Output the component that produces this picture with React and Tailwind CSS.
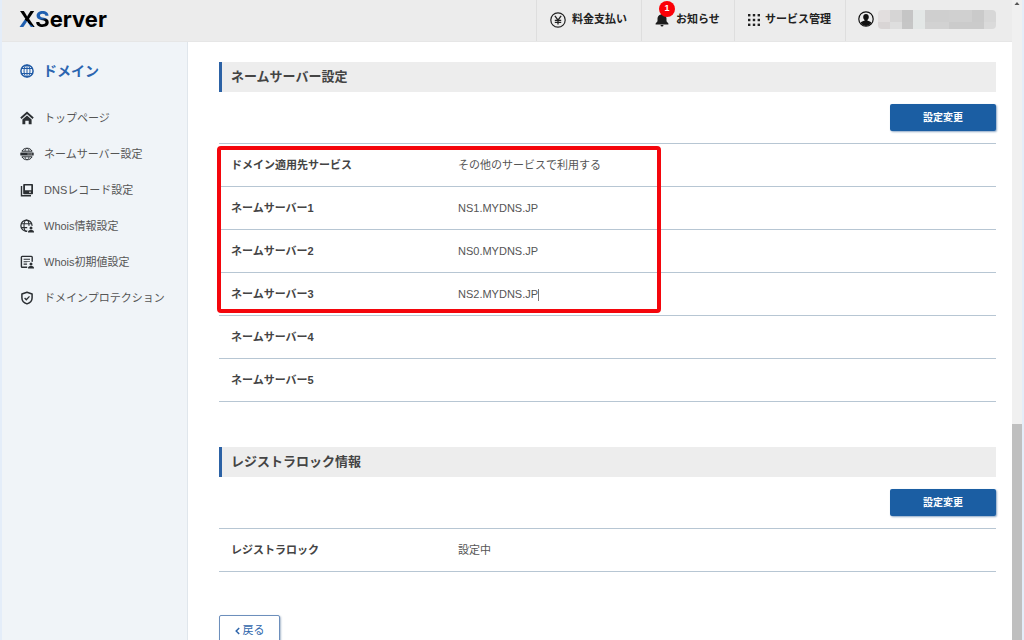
import React from "react";

const BLUE = "#1f5aa6";

function GlobeIcon({ className }) {
  return (
    <svg className={className} viewBox="0 0 14 14" fill="none" stroke={BLUE} aria-hidden="true">
      <circle cx="7" cy="7" r="6.1" strokeWidth="1.5" />
      <ellipse cx="7" cy="7" rx="3" ry="6" strokeWidth="1" />
      <path d="M7 1v12M1.8 4.500h10.400M1.800 9.500h10.400" strokeWidth="1" />
    </svg>
  );
}

function HomeIcon() {
  return (
    <svg className="h-[14px] w-[14px]" viewBox="0 0 14 14" aria-hidden="true">
      <path d="M.9 7.2 7 1.8l6.1 5.4" fill="none" stroke="#2b2f33" strokeWidth="1.9" />
      <path d="M2.4 8.400 7 4.500l4.600 3.900v4.900H8.700V9.800H5.300v3.500H2.400z" fill="#2b2f33" />
    </svg>
  );
}

function NameServerIcon() {
  return (
    <svg className="h-[14px] w-[14px]" viewBox="0 0 14 14" fill="none" stroke="#2b2f33" aria-hidden="true">
      <path d="M1.900 4.200C2.800 2.400 4.700 1.200 7 1.200s4.200 1.200 5.100 3zM1.900 9.800c.9 1.800 2.800 3 5.100 3s4.200-1.200 5.100-3z" strokeWidth="1" />
      <path d="M5 4.200c.3-1.500.9-2.800 2-2.800s1.700 1.300 2 2.800M5 9.800c.3 1.500.9 2.800 2 2.800s1.700-1.300 2-2.800" strokeWidth=".8" />
      <rect x=".3" y="5.600" width="13.400" height="2.800" rx=".5" fill="#2b2f33" stroke="none" />
      <path d="M7.600 7h1M9.500 7h1M11.300 7h.8" stroke="#fff" strokeWidth=".9" />
    </svg>
  );
}

function RecordIcon() {
  return (
    <svg className="h-[14px] w-[14px]" viewBox="0 0 14 14" aria-hidden="true">
      <path d="M1.500 3v9.800H11" fill="none" stroke="#2b2f33" strokeWidth="1.400" />
      <path fillRule="evenodd" d="M4 1h8.200a.8.8 0 0 1 .8.8v8.600a.8.8 0 0 1-.8.8H4a.8.8 0 0 1-.8-.8V1.800A.8.8 0 0 1 4 1zm1 1.600v4.600h6.300V2.600z" fill="#2b2f33" />
      <path d="M9 9.200h2" stroke="#fff" strokeWidth=".9" />
    </svg>
  );
}

function PersonMark() {
  return (
    <g>
      <path d="M7.200 14V6.800H14V14z" fill="#f0f4f8" />
      <circle cx="11" cy="8.900" r="1.500" fill="#2b2f33" />
      <path d="M8 13.600v-1.100c0-1 1.500-1.600 3-1.600s3 .6 3 1.600v1.100z" fill="#2b2f33" />
    </g>
  );
}

function WhoisIcon() {
  return (
    <svg className="h-[14px] w-[14px]" viewBox="0 0 14 14" aria-hidden="true">
      <g fill="none" stroke="#2b2f33">
        <circle cx="6.500" cy="6.700" r="5.600" strokeWidth="1.300" />
        <ellipse cx="6.500" cy="6.700" rx="2.500" ry="5.600" strokeWidth="1.100" />
        <path d="M1.300 4.800h10.400M1.300 8.600h10.400" strokeWidth="1.100" />
      </g>
      <PersonMark />
    </svg>
  );
}

function WhoisDefaultIcon() {
  return (
    <svg className="h-[14px] w-[14px]" viewBox="0 0 14 14" aria-hidden="true">
      <g fill="none" stroke="#2b2f33">
        <rect x="1.400" y="1.400" width="10.800" height="10.800" rx=".8" strokeWidth="1.400" />
        <path d="M3.600 4.300h6.400M3.600 6.700h6.400M3.600 9.100h3.600" strokeWidth="1.100" />
      </g>
      <PersonMark />
    </svg>
  );
}

function ShieldIcon() {
  return (
    <svg className="h-[14px] w-[14px]" viewBox="0 0 14 14" fill="none" stroke="#2b2f33" aria-hidden="true">
      <path d="M7 1.200 12.100 3v3.700c0 3-2.100 5.300-5.100 6.200-3-.9-5.100-3.200-5.100-6.200V3z" strokeWidth="1.500" strokeLinejoin="round" />
      <path d="m4.600 7 1.700 1.700 3.200-3.300" strokeWidth="1.300" />
    </svg>
  );
}

function YenIcon() {
  return (
    <svg className="h-4 w-4" viewBox="0 0 16 16" fill="none" stroke="#222" aria-hidden="true">
      <circle cx="8" cy="8" r="7.200" strokeWidth="1.200" />
      <path d="m4.900 3.900 3.100 4.300 3.100-4.300M8 8v4.400M4.800 8.300h6.400M4.800 10.300h6.400" strokeWidth="1.300" />
    </svg>
  );
}

function BellIcon() {
  return (
    <svg className="h-[14px] w-[14px]" viewBox="0 0 14 14" fill="#1c1c1c" aria-hidden="true">
      <path d="M7 .5c.7 0 1.100.4 1.100 1.100C10.200 2.100 11.500 3.700 11.500 5.600v2.600l1.900 2.300v1H.6v-1l1.900-2.300V5.600c0-1.900 1.300-3.500 3.400-4C5.900.9 6.300.5 7 .5z" />
      <path d="M5.500 12.100h3a1.500 1.500 0 0 1-3 0z" />
    </svg>
  );
}

function GridIcon() {
  return (
    <svg className="h-3 w-3" viewBox="0 0 12 12" fill="#222" aria-hidden="true">
      {[0, 4.8, 9.6].map((y) =>
        [0, 4.8, 9.6].map((x) => <rect key={x + "-" + y} x={x} y={y} width="2.400" height="2.400" />)
      )}
    </svg>
  );
}

function UserIcon() {
  return (
    <svg className="h-4 w-4" viewBox="0 0 16 16" aria-hidden="true">
      <circle cx="8" cy="8" r="7.200" fill="none" stroke="#111" strokeWidth="1.200" />
      <path d="M8 3c1.700 0 2.800 1.200 2.800 3 0 1.200-.5 2.300-1.300 2.900v.9c1.700.4 3.200.9 4 1.900A7 7 0 0 1 8 15a7 7 0 0 1-5.500-3.300c.8-1 2.300-1.500 4-1.900v-.9C5.700 8.300 5.200 7.200 5.200 6c0-1.800 1.100-3 2.800-3z" fill="#111" />
    </svg>
  );
}

const NAV = [
  { label: "トップページ", Icon: HomeIcon },
  { label: "ネームサーバー設定", Icon: NameServerIcon },
  { label: "DNSレコード設定", Icon: RecordIcon },
  { label: "Whois情報設定", Icon: WhoisIcon },
  { label: "Whois初期値設定", Icon: WhoisDefaultIcon },
  { label: "ドメインプロテクション", Icon: ShieldIcon },
];

const SERVERS = [
  ["ドメイン適用先サービス", "その他のサービスで利用する"],
  ["ネームサーバー1", "NS1.MYDNS.JP"],
  ["ネームサーバー2", "NS0.MYDNS.JP"],
  ["ネームサーバー3", "NS2.MYDNS.JP"],
  ["ネームサーバー4", ""],
  ["ネームサーバー5", ""],
];

function Logo() {
  return (
    <a href="#" className="flex items-center pb-1 font-['Inter',sans-serif] text-[22px] leading-none font-bold text-black">
      <span className="bg-[linear-gradient(40deg,#1f5fb0_42%,#000_43%)] bg-clip-text text-transparent">X</span>
      <span className="bg-[linear-gradient(165deg,#1f5fb0_48%,#000_58%)] bg-clip-text text-transparent">S</span>
      <span>erver</span>
    </a>
  );
}

function MaskedName() {
  return (
    <div className="grid h-[19px] grid-cols-10 grid-rows-[12px_7px] overflow-hidden rounded-[4px]">
      <i className="bg-[#e2dede]" />
      <i className="bg-[#d6d5d5]" />
      <i className="bg-[#c5c5c5]" />
      <i className="bg-[#e3e7e6]" />
      <i className="col-span-2 bg-[#cfcfcf]" />
      <i className="col-span-2 bg-[#d0d0d0]" />
      <i className="bg-[#cacaca]" />
      <i className="bg-[#d7d7d7]" />
      <i className="bg-[#d9d5d5]" />
      <i className="bg-[#dedede]" />
      <i className="bg-[#c6c6c6]" />
      <i className="bg-[#e3e7e6]" />
      <i className="col-span-2 bg-[#d2d2d2]" />
      <i className="col-span-3 bg-[#cbcbcb]" />
      <i className="bg-[#dadada]" />
    </div>
  );
}

function Section({ title, rows, highlight }) {
  return (
    <section>
      <h2 className="flex h-[30px] items-center border-l-[3px] border-[#2c62a5] bg-[#ededed] pl-[9px] text-[13px] font-bold text-[#444]">
        {title}
      </h2>
      <div className="flex justify-end pt-3 pb-3">
        <button type="button" className="h-[27px] w-[106px] rounded-[2px] bg-[#1b5ea3] text-[10px] font-bold text-white shadow-[1px_1px_2px_#8fa9c6]">
          設定変更
        </button>
      </div>
      <div className="relative">
        <table className="w-full border-separate border-spacing-0 border-t border-[#b7c6d3] text-left text-[11px]">
          <tbody>
            {rows.map(([name, value], i) => (
              <tr key={name} className="h-[43px]">
                <th scope="row" className="w-[239px] border-b border-[#b7c6d3] pl-3 font-bold text-[#444]">{name}</th>
                <td className="border-b border-[#b7c6d3] text-[#555]">
                  {value}
                  {highlight && i === 3 && <span className="inline-block h-3 border-l border-[#777] align-middle" />}
                </td>
              </tr>
            ))}
          </tbody>
        </table>
        {highlight && <div className="pointer-events-none absolute top-[3px] -left-[2px] h-[167px] w-[444px] rounded-[4px] border-[4px] border-[#f4060c]" />}
      </div>
    </section>
  );
}

export default function App() {
  return (
    <div className="flex h-screen overflow-hidden border-x-2 border-[#e4edf9] bg-white font-['Liberation_Sans','Noto_Sans_CJK_JP',sans-serif] text-[#444]">
      <div className="flex min-w-0 flex-1 flex-col">
        <header className="flex h-[42px] shrink-0 items-stretch justify-between border-b border-[#e6e6e6] bg-[#ececec] pl-[17px]">
          <Logo />
          <nav className="flex items-stretch text-[11px] font-bold text-[#222]">
            <a href="#" className="flex w-[105px] items-center gap-[6px] border-l border-[#dedede] pb-[2px] pl-[13px]">
              <YenIcon />
              料金支払い
            </a>
            <a href="#" className="flex w-[93px] items-center gap-[7px] border-l border-[#dedede] pb-[2px] pl-[13px]">
              <span className="relative">
                <BellIcon />
                <span className="absolute -top-[12px] left-[4px] flex h-4 w-4 items-center justify-center rounded-full bg-[#fb0007] text-[9px] text-white">1</span>
              </span>
              お知らせ
            </a>
            <a href="#" className="flex w-[111px] items-center gap-[5px] border-l border-[#dedede] pb-[2px] pl-[13px]">
              <GridIcon />
              サービス管理
            </a>
            <a href="#" aria-label="アカウント" className="flex w-[167px] items-center gap-[4px] border-l border-[#dedede] pb-[3px] pl-[12px]">
              <UserIcon />
              <span className="w-[118px]"><MaskedName /></span>
            </a>
          </nav>
        </header>
        <div className="flex min-h-0 flex-1">
          <aside className="w-[186px] shrink-0 border-r border-[#e0e6ec] bg-[#f0f4f8] pt-[17px] pl-[18px]">
            <a href="#" className="flex h-6 items-center gap-[9px] text-[14px] font-bold text-[#2c65b0]">
              <GlobeIcon className="h-[14px] w-[14px]" />
              ドメイン
            </a>
            <ul className="mt-[17px] text-[11px] text-[#555]">
              {NAV.map(({ label, Icon }) => (
                <li key={label}>
                  <a href="#" className="flex h-9 items-center gap-[10px]">
                    <Icon />
                    {label}
                  </a>
                </li>
              ))}
            </ul>
          </aside>
          <main className="min-w-0 flex-1 overflow-hidden pt-5 pr-4 pl-[31px]">
            <Section title="ネームサーバー設定" rows={SERVERS} highlight />
            <div className="mt-[45px]">
              <Section title="レジストラロック情報" rows={[["レジストラロック", "設定中"]]} />
            </div>
            <button type="button" className="mt-[43px] flex h-[31px] w-[61px] items-center justify-center gap-[3px] rounded-[2px] border border-[#6d8fbc] bg-white text-[11px] text-[#2f66ab] shadow-[1px_1px_2px_#a9b9cc]">
              <svg className="h-2 w-[5px]" viewBox="0 0 5 8" fill="none" stroke="currentColor" strokeWidth="1.500" aria-hidden="true">
                <path d="M4.200 1 1.200 4l3 3" />
              </svg>
              戻る
            </button>
          </main>
        </div>
      </div>
      <div className="flex w-[10px] shrink-0 flex-col bg-[#f0f0f0]" aria-hidden="true">
        <svg className="h-2 w-full" viewBox="0 0 10 8">
          <path d="M2.500 5 5 2l2.500 3z" fill="#555" />
        </svg>
        <div className="flex-[416]" />
        <div className="flex-[216] bg-[#bfbfbf]" />
      </div>
    </div>
  );
}
